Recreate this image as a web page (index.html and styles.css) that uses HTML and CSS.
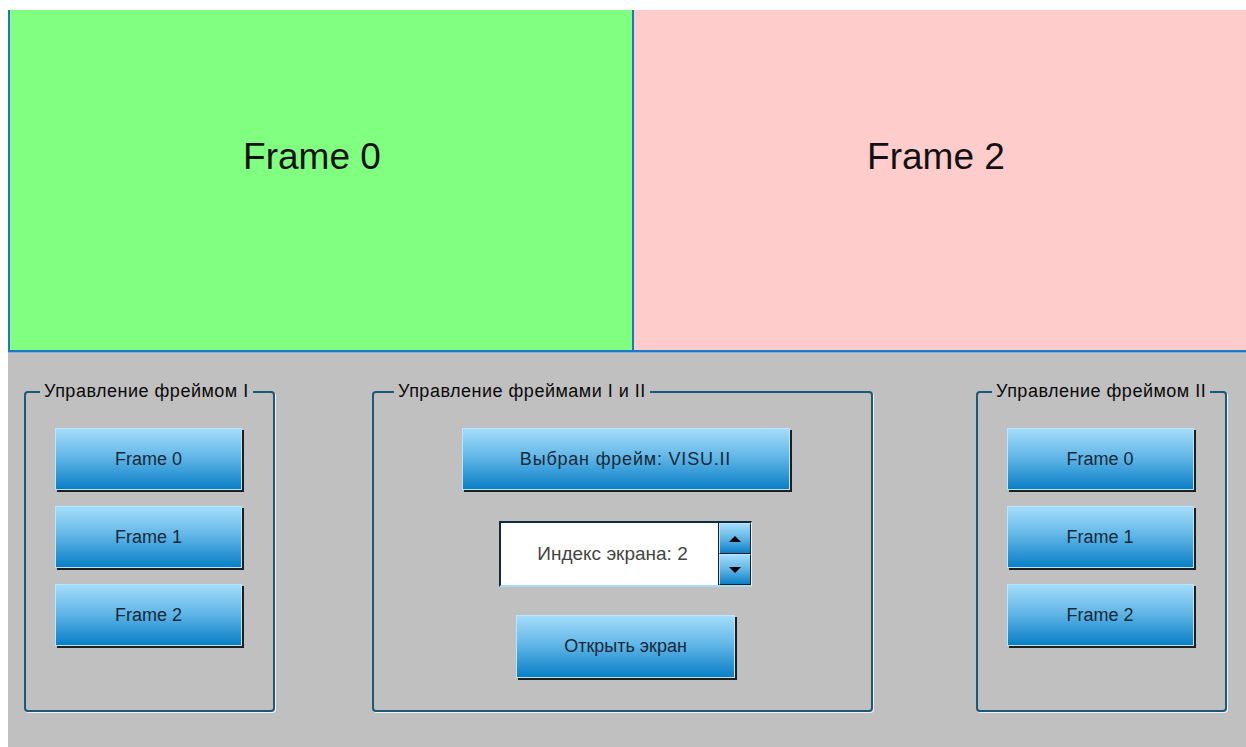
FILE: index.html
```html
<!DOCTYPE html>
<html lang="ru">
<head>
  <meta charset="UTF-8">
  <title>Frames</title>
  <link rel="stylesheet" href="styles.css">
</head>
<body>
  <div class="screen">
    <div class="frames">
      <div class="frame frame-green">Frame 0</div>
      <div class="frame frame-pink">Frame 2</div>
    </div>

    <div class="panel">
      <fieldset class="group group-left">
        <legend>Управление фреймом I</legend>
        <button class="btn btn-frame">Frame 0</button>
        <button class="btn btn-frame">Frame 1</button>
        <button class="btn btn-frame">Frame 2</button>
      </fieldset>

      <fieldset class="group group-middle">
        <legend>Управление фреймами I и II</legend>
        <button class="btn btn-wide">Выбран фрейм: VISU.II</button>
        <div class="spin">
          <div class="spin-value">Индекс экрана: 2</div>
          <div class="spin-arrows">
            <button class="spin-btn"><span class="tri tri-up"></span></button>
            <button class="spin-btn"><span class="tri tri-down"></span></button>
          </div>
        </div>
        <button class="btn btn-open">Открыть экран</button>
      </fieldset>

      <fieldset class="group group-right">
        <legend>Управление фреймом II</legend>
        <button class="btn btn-frame">Frame 0</button>
        <button class="btn btn-frame">Frame 1</button>
        <button class="btn btn-frame">Frame 2</button>
      </fieldset>
    </div>
  </div>
</body>
</html>
```

FILE: styles.css
```css
body {
  margin: 0;
  background-color: #fff;
  font-family: "Liberation Sans", Arial, sans-serif;
}

.screen {
  margin: 10px 0 0 8px;
  height: 737px;
  display: flex;
  flex-direction: column;
}

/* Top frames */
.frames {
  display: flex;
  height: 340px;
  border-bottom: 2px solid #1c78c4;
  box-shadow: 0 1px 0 #7fb4e0;
}

.frame {
  display: flex;
  align-items: center;
  justify-content: center;
  font-size: 37px;
  color: #111;
  padding-bottom: 46px;
  box-sizing: border-box;
}

.frame-green {
  width: 626px;
  background-color: #80ff80;
  border-left: 2px solid #1c78c4;
  border-right: 2px solid #1c78c4;
  padding-right: 18px;
}

.frame-pink {
  flex: 1;
  background-color: #ffcccc;
  padding-right: 8px;
}

/* Bottom control panel */
.panel {
  flex: 1;
  background-color: #c0c0c0;
  display: flex;
  align-items: flex-start;
  padding-top: 28px;
  margin-top: 1px;
}

.group {
  margin: 0;
  height: 331px;
  box-sizing: border-box;
  border: 2px solid #1d5878;
  border-radius: 4px;
  box-shadow: 1px 1px 0 #f2f2f2;
  padding: 0;
  display: flex;
  flex-direction: column;
  align-items: center;
}

.group legend {
  font-size: 18px;
  letter-spacing: 0.5px;
  color: #0a0a0a;
  padding: 0 4px;
  margin-left: 14px;
}

.group-left {
  width: 251px;
  margin-left: 16px;
  padding-right: 2px;
}

.group-middle {
  width: 501px;
  margin-left: 97px;
  padding-left: 6px;
}

.group-right {
  width: 251px;
  margin-left: 103px;
  padding-right: 3px;
}

/* Buttons */
.btn {
  font-family: "Liberation Sans", Arial, sans-serif;
  font-size: 18px;
  color: #17293a;
  background: linear-gradient(to bottom, #a4dcfa 0%, #64b8e8 45%, #0a7fc6 100%);
  border: 1px solid #b8e6ff;
  box-shadow: 2px 2px 0 #1e1e1e;
  padding: 0;
  cursor: pointer;
}

.btn-frame {
  width: 187px;
  height: 62px;
  margin-bottom: 16px;
}

.btn-frame:first-of-type {
  margin-top: 26px;
}

.btn-wide {
  width: 328px;
  height: 62px;
  margin-top: 26px;
  letter-spacing: 0.8px;
}

.btn-open {
  width: 219px;
  height: 63px;
  margin-top: 28px;
}

/* Spin box */
.spin {
  display: flex;
  width: 253px;
  height: 66px;
  margin-top: 31px;
  box-sizing: border-box;
  border-top: 2px solid #0d2c40;
  border-left: 2px solid #0d2c40;
  border-bottom: 2px solid #a8dcf6;
  border-right: 1px solid #e8f4fb;
  background-color: #fff;
}

.spin-value {
  flex: 1;
  display: flex;
  align-items: center;
  justify-content: center;
  font-size: 19px;
  color: #444;
  padding-left: 6px;
}

.spin-arrows {
  width: 32px;
  display: flex;
  flex-direction: column;
  border-left: 1px solid #1e1e1e;
}

.spin-btn {
  flex: 1;
  padding: 0;
  display: flex;
  align-items: center;
  justify-content: center;
  background: linear-gradient(to bottom, #a4dcfa 0%, #5fb5e6 50%, #0a7fc6 100%);
  border: 1px solid #b8e6ff;
  border-bottom: 1px solid #1e1e1e;
  border-right: 1px solid #1e1e1e;
}

.tri {
  width: 0;
  height: 0;
  border-left: 6px solid transparent;
  border-right: 6px solid transparent;
}

.tri-up {
  border-bottom: 6px solid #000;
}

.tri-down {
  border-top: 6px solid #000;
}
```
